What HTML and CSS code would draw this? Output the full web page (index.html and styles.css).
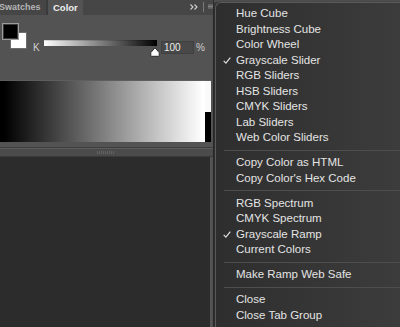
FILE: index.html
```html
<!DOCTYPE html>
<html lang="en">
<head>
    <meta charset="UTF-8">
    <meta name="viewport" content="width=device-width, initial-scale=1.0">
    <title>Color panel menu</title>
    <link rel="stylesheet" href="styles.css">
</head>
<body>
    <div class="workspace">
        <div class="column">
            <div class="tabbar">
                <div class="tab">Swatches</div>
                <div class="tab active">Color</div>
                <div class="tab-tools">
                    <svg class="collapse" width="8" height="6" viewBox="0 0 8 6">
                        <path d="M0.5 0.5 L3 3 L0.5 5.5 M4.5 0.5 L7 3 L4.5 5.5" fill="none" stroke="#cfcfcf" stroke-width="1.1"/>
                    </svg>
                    <span class="tool-sep"></span>
                    <svg class="panel-menu" width="7" height="7" viewBox="0 0 7 7">
                        <path d="M0 1.5 H7 M0 3.5 H7 M0 5.5 H7" stroke="#9a9a9a" stroke-width="1"/>
                    </svg>
                </div>
            </div>

            <div class="panel-body">
                <div class="picker">
                    <div class="swatch-stack">
                        <div class="swatch swatch-bg"></div>
                        <div class="swatch swatch-fg"></div>
                    </div>
                    <div class="channel">
                        <span class="channel-label">K</span>
                        <div class="track-wrap">
                            <div class="track"></div>
                            <svg class="thumb" width="10" height="10" viewBox="0 0 10 10">
                                <path d="M5 0.8 L9.2 5.6 V8.6 Q9.2 9.3 8.5 9.3 H1.5 Q0.8 9.3 0.8 8.6 V5.6 Z" fill="#fff" stroke="#2a2a2a" stroke-width="1"/>
                            </svg>
                        </div>
                        <div class="value">100</div>
                        <span class="pct">%</span>
                    </div>
                </div>

                <div class="ramp">
                    <div class="ramp-gradient"></div>
                    <div class="ramp-ends">
                        <div class="end-white"></div>
                        <div class="end-black"></div>
                    </div>
                </div>
            </div>

            <div class="grip"><span class="grip-dots"></span></div>
            <div class="dock-empty"></div>
        </div>
        <div class="gutter"></div>
    </div>

    <ul class="flyout">
        <li><span class="check-slot"></span>Hue Cube</li>
        <li><span class="check-slot"></span>Brightness Cube</li>
        <li><span class="check-slot"></span>Color Wheel</li>
        <li><span class="check-slot"><svg width="8" height="7" viewBox="0 0 8 7"><path d="M0.7 3.9 L2.9 6.1 L7.3 0.7" fill="none" stroke="#e2e2e2" stroke-width="1.2"/></svg></span>Grayscale Slider</li>
        <li><span class="check-slot"></span>RGB Sliders</li>
        <li><span class="check-slot"></span>HSB Sliders</li>
        <li><span class="check-slot"></span>CMYK Sliders</li>
        <li><span class="check-slot"></span>Lab Sliders</li>
        <li><span class="check-slot"></span>Web Color Sliders</li>
        <li class="sep"></li>
        <li><span class="check-slot"></span>Copy Color as HTML</li>
        <li><span class="check-slot"></span>Copy Color's Hex Code</li>
        <li class="sep"></li>
        <li><span class="check-slot"></span>RGB Spectrum</li>
        <li><span class="check-slot"></span>CMYK Spectrum</li>
        <li><span class="check-slot"><svg width="8" height="7" viewBox="0 0 8 7"><path d="M0.7 3.9 L2.9 6.1 L7.3 0.7" fill="none" stroke="#e2e2e2" stroke-width="1.2"/></svg></span>Grayscale Ramp</li>
        <li><span class="check-slot"></span>Current Colors</li>
        <li class="sep"></li>
        <li><span class="check-slot"></span>Make Ramp Web Safe</li>
        <li class="sep"></li>
        <li><span class="check-slot"></span>Close</li>
        <li><span class="check-slot"></span>Close Tab Group</li>
    </ul>
</body>
</html>
```

FILE: styles.css
```css
body {
    margin: 0;
    width: 400px;
    height: 327px;
    overflow: hidden;
    position: relative;
    background-color: #3c3c3c;
    font-family: "Liberation Sans", Arial, sans-serif;
}

.workspace {
    display: flex;
    height: 327px;
}

.column {
    width: 213px;
    display: flex;
    flex-direction: column;
    background-color: #535353;
    border-right: 1px solid #2e2e2e;
}

.gutter {
    flex: 1;
    background-color: #3d3d3d;
    border-top: 2px solid #505050;
}

/* tabs */
.tabbar {
    height: 15px;
    flex-shrink: 0;
    display: flex;
    background-color: #464646;
}

.tab {
    font-size: 9px;
    font-weight: bold;
    line-height: 15px;
    color: #b4b4b4;
    white-space: nowrap;
}

.tab:first-child {
    width: 46px;
    text-indent: -1px;
    border-right: 2px solid #3b3b3b;
}

.tab.active {
    width: 35px;
    padding-left: 5px;
    box-sizing: border-box;
    font-size: 9.5px;
    color: #efefef;
    background-color: #535353;
}

.tab-tools {
    margin-left: auto;
    display: flex;
    align-items: center;
}

.collapse {
    display: block;
    margin-top: -2px;
}

.tool-sep {
    width: 1px;
    height: 10px;
    margin-left: 5px;
    margin-top: -1px;
    background-color: #7a7a7a;
}

.panel-menu {
    display: block;
    margin-left: 4px;
    width: 5px;
    margin-top: -2px;
}

/* panel content */
.panel-body {
    height: 132px;
    flex-shrink: 0;
}

.picker {
    height: 66px;
    box-sizing: border-box;
    padding: 8px 0 0 2px;
    display: flex;
    align-items: flex-start;
}

.swatch-stack {
    width: 25px;
    height: 26px;
    position: relative;
}

.swatch {
    position: absolute;
    width: 17px;
    height: 17px;
    box-sizing: border-box;
}

.swatch-fg {
    left: 0;
    top: 0;
    background-color: #000;
    border: 1px solid #9c9c9c;
    box-shadow: inset 0 0 0 1px #3a3a3a;
}

.swatch-bg {
    left: 8px;
    top: 9px;
    background-color: #fff;
    border: 1px solid #6c6c6c;
}

.channel {
    display: flex;
    align-items: flex-start;
    margin-top: 17px;
    margin-left: 6px;
}

.channel-label {
    width: 6px;
    margin-top: 3px;
    font-size: 10px;
    line-height: 10px;
    color: #cfcfcf;
}

.track-wrap {
    position: relative;
    width: 113px;
    height: 6px;
    margin-left: 5px;
}

.track {
    height: 6px;
    background: linear-gradient(to right, #ffffff, #000000);
    box-shadow: inset 0 1px 0 rgba(0, 0, 0, 0.15);
}

.thumb {
    position: absolute;
    left: 106px;
    top: 7px;
}

.value {
    width: 33px;
    height: 13px;
    box-sizing: border-box;
    margin-left: 4px;
    margin-top: 1px;
    padding-left: 2px;
    border: 1px solid #404040;
    background-color: #484848;
    font-size: 10px;
    line-height: 11px;
    color: #ececec;
}

.pct {
    margin-left: 2px;
    margin-top: 3px;
    font-size: 10px;
    line-height: 10px;
    color: #cfcfcf;
}

.ramp {
    display: flex;
    width: 211px;
    height: 61px;
    box-shadow: 0 -1px 0 #5e5e5e;
}

.ramp-gradient {
    flex: 1;
    background: linear-gradient(to right, #000000 2%, #ffffff 99%);
}

.ramp-ends {
    width: 6px;
    display: flex;
    flex-direction: column;
}

.end-white {
    height: 31px;
    background-color: #fafafa;
}

.end-black {
    flex: 1;
    background-color: #000;
}

.grip {
    height: 10px;
    flex-shrink: 0;
    box-sizing: border-box;
    background-color: #4b4b4b;
    border-top: 1px solid #3d3d3d;
    border-bottom: 1px solid #3a3a3a;
    box-shadow: inset 0 1px 0 #5c5c5c;
    display: flex;
    justify-content: center;
    align-items: center;
}

.grip-dots {
    width: 17px;
    height: 3px;
    margin-right: 3px;
    background: repeating-linear-gradient(to right, #626262 0 1px, #4b4b4b 1px 2px);
}

.dock-empty {
    flex: 1;
    background-color: #2c2c2c;
    margin-right: 2px;
    border-right: 1px solid #555;
}

/* flyout menu */
.flyout {
    position: absolute;
    left: 215px;
    top: 2px;
    bottom: 0;
    width: 185px;
    margin: 0;
    padding: 3px 0 0;
    overflow: hidden;
    list-style: none;
    border: 1px solid #5a5a5a;
    border-right: none;
    border-bottom: none;
    border-top-left-radius: 6px;
    background: linear-gradient(to right, #2e2e2e, #3c3c3c);
    box-shadow: -1px 0 2px rgba(0, 0, 0, 0.35);
    color: #e4e4e4;
    font-size: 11.5px;
}

.flyout li {
    height: 15.5px;
    line-height: 15.5px;
    padding-left: 7px;
    display: flex;
    align-items: center;
    white-space: nowrap;
}

.check-slot {
    width: 13px;
    display: flex;
    align-items: center;
}

.check-slot svg {
    display: block;
    margin-top: 1px;
}

.flyout li.sep {
    height: 9.5px;
    padding-left: 0;
    margin-left: 8px;
}

.flyout li.sep::after {
    content: "";
    flex: 1;
    height: 1px;
    background-color: #4e4e4e;
}
```
